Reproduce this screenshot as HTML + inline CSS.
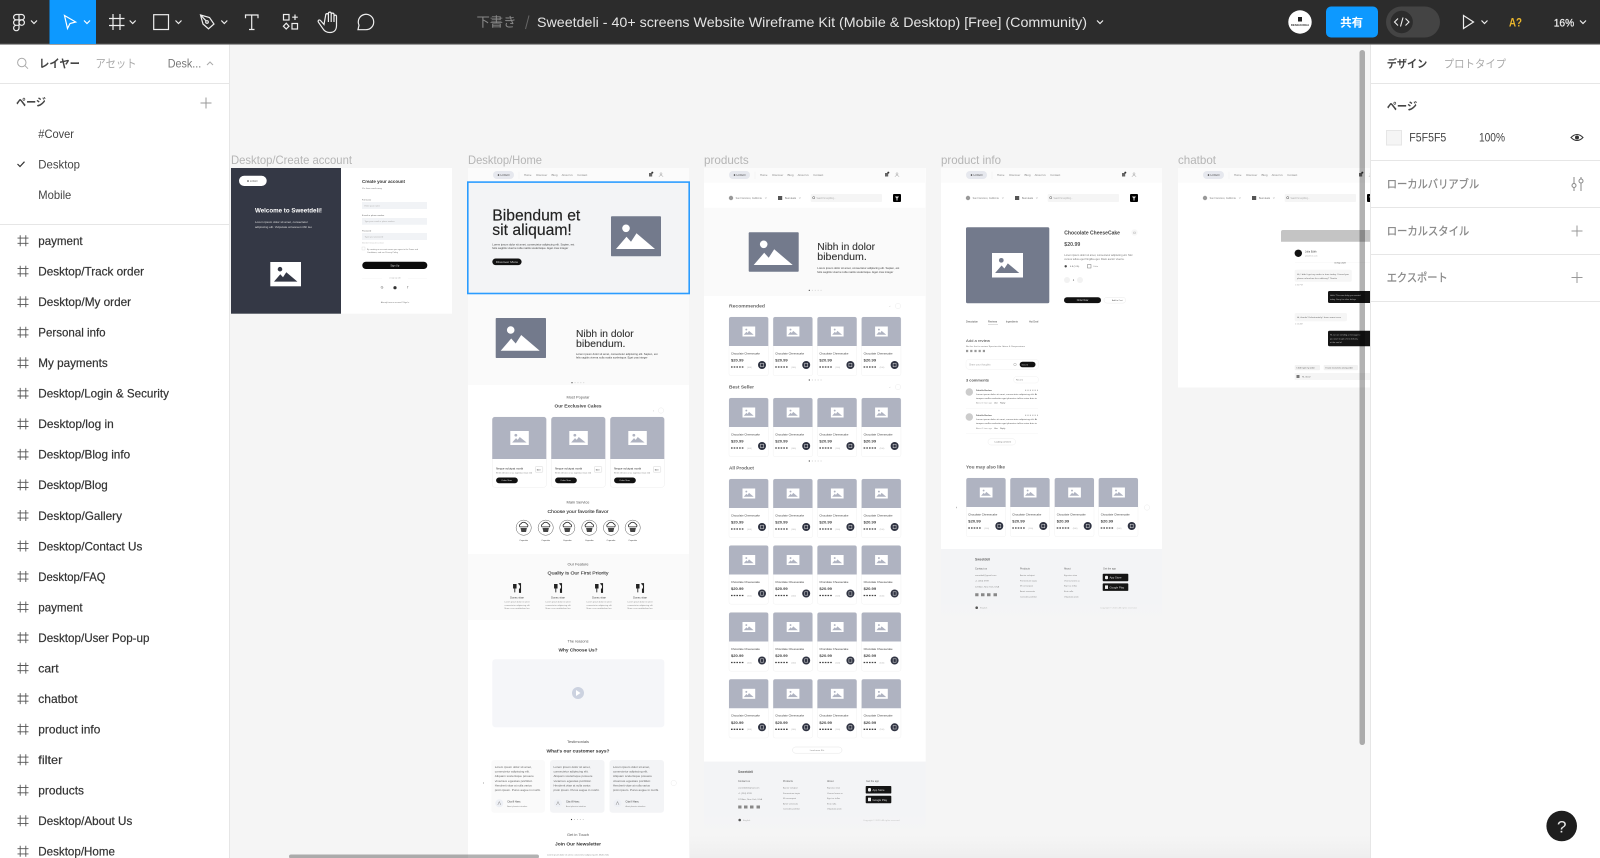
<!DOCTYPE html>
<html lang="ja"><head><meta charset="utf-8"><title>Sweetdeli - Figma</title>
<style>
html,body{margin:0;padding:0;width:1600px;height:858px;overflow:hidden;background:#f5f5f5}
svg{display:block;position:absolute;left:0;top:0;filter:blur(.35px)}
text{font-family:"Liberation Sans","Noto Sans CJK JP",sans-serif}
.ly{font-size:12px;fill:#333;stroke:#333;stroke-width:.2}
.pg{font-size:12px;fill:#444}
.lb{font-size:12px;fill:#b5b5b5}
.sec{font-size:11.5px;fill:#888;stroke:#888;stroke-width:.25}
</style></head><body>
<svg width="1600" height="858" viewBox="0 0 1600 858" xmlns="http://www.w3.org/2000/svg">
<defs>
<g id="mtn"><circle cx="15" cy="12" r="3.8"/><path d="M5 32.7L15.5 20.5 20 25.5 25.5 17 44 32.7z"/></g>
<path id="chev" d="M-3-1.5L0 1.5 3-1.5" fill="none"/>
<g id="hash"><path d="M-2.8-5.5V5.5M2.8-5.5V5.5M-5.5-2.6H5.5M-5.5 2.6H5.5" fill="none" stroke="#555" stroke-width=".9"/></g>
<g id="plus"><path d="M-5.5 0H5.5M0-5.5V5.5" stroke="#999" stroke-width="1" fill="none"/></g>
<g id="card">
<rect width="39.3" height="58.7" rx="2" fill="#fff" stroke="#eeeeee" stroke-width=".4"/>
<path d="M0 29V2a2 2 0 0 1 2-2h35.3a2 2 0 0 1 2 2v27z" fill="#afb3c1"/>
<rect x="13.5" y="9.5" width="12.7" height="10" fill="#fff"/>
<use href="#mtn" transform="translate(13.5 9.5) scale(.254)" fill="#afb3c1"/>
<text x="2" y="37.3" font-size="2.5" fill="#444" textLength="29" lengthAdjust="spacingAndGlyphs">Chocolate Cheesecake</text>
<text x="2" y="44.7" font-size="3.4" font-weight="700" fill="#444" textLength="12.5" lengthAdjust="spacingAndGlyphs">$20.99</text>
<path d="M2 50H15.5" stroke="#444" stroke-width="1.3" stroke-dasharray="1.6 1.1"/>
<text x="18" y="50.8" font-size="2" fill="#aaa">(100)</text>
<circle cx="33" cy="48" r="4" fill="#2f3342"/><rect x="31.5" y="46.3" width="3" height="3.4" fill="none" stroke="#ddd" stroke-width=".5"/>
</g>
<g id="nav">
<rect width="221" height="14.7" fill="#fbfbfb"/>
<rect x="25" y="3" width="21" height="8" rx="4" fill="#e6e8ee"/><circle cx="30.5" cy="7" r=".8" fill="#333"/><text x="32.5" y="8" font-size="2.6" fill="#444" textLength="9" lengthAdjust="spacingAndGlyphs">LOGO</text>
<path d="M51 3.5V11" stroke="#eee" stroke-width=".4"/>
<g font-size="2.4" fill="#888"><text x="56" y="7.8" textLength="7.5" lengthAdjust="spacingAndGlyphs">Home</text><text x="68.3" y="7.8" textLength="11" lengthAdjust="spacingAndGlyphs">Discover</text><text x="83.5" y="7.8" textLength="6" lengthAdjust="spacingAndGlyphs">Blog</text><text x="93.7" y="7.8" textLength="11" lengthAdjust="spacingAndGlyphs">About Us</text><text x="109.3" y="7.8" textLength="10" lengthAdjust="spacingAndGlyphs">Contact</text></g>
<rect x="181" y="5" width="3.2" height="3.5" fill="#666"/><circle cx="184.3" cy="4.6" r="1" fill="#333"/>
<circle cx="193" cy="5.8" r="1" fill="none" stroke="#888" stroke-width=".4"/><path d="M191 9c0-2 4-2 4 0" fill="none" stroke="#888" stroke-width=".4"/>
</g>
<g id="srch">
<circle cx="27" cy="30" r="2.2" fill="#999"/><text x="31.7" y="30.8" font-size="2.3" fill="#888" textLength="26" lengthAdjust="spacingAndGlyphs">San Francisco, California</text>
<path d="M61 29.5l.8 1 .8-1" stroke="#888" stroke-width=".4" fill="none"/>
<rect x="74" y="28" width="4.2" height="4" fill="#555"/><text x="81" y="30.8" font-size="2.3" fill="#777" textLength="11" lengthAdjust="spacingAndGlyphs">Best deals</text><path d="M95 29.5l.8 1 .8-1" stroke="#888" stroke-width=".4" fill="none"/>
<rect x="106.7" y="26" width="71.3" height="8" rx="1" fill="#f5f5f5"/><circle cx="109.7" cy="29.7" r="1.1" fill="none" stroke="#555" stroke-width=".5"/><text x="112.5" y="30.8" font-size="2.3" fill="#aaa" textLength="19" lengthAdjust="spacingAndGlyphs">Search for anything...</text>
<rect x="189" y="26" width="8" height="8" rx="1" fill="#000"/><path d="M191 28.5h4l-1.5 2v2h-1v-2z" fill="#ddd"/>
</g>
<g id="foot">
<text x="738" y="773" font-size="3.3" font-weight="700" fill="#666">Sweetdeli</text>
<g font-size="2.5" fill="#666">
<text x="738" y="782">Contact us</text><text x="783" y="782">Products</text><text x="827" y="782">About</text><text x="866" y="782">Get the app</text></g>
<g font-size="2.2" fill="#888">
<text x="738" y="788.5">sweetdeli@gmail.com</text><text x="738" y="794">+1 (234) 5789</text><text x="738" y="800">123 Ave, New York, USA</text>
<text x="783" y="788.5">Auctor volutpat</text><text x="783" y="794">Fermentum turpis</text><text x="783" y="799">Mi consequat</text><text x="783" y="804.3">Amet venenatis</text><text x="783" y="809.7">Convallis porttitor</text>
<text x="827" y="788.5">Egestas vitae</text><text x="827" y="794">Viverra lorem ac</text><text x="827" y="799">Eget ac tellus</text><text x="827" y="804.3">Erat nulla</text><text x="827" y="809.7">Vulputate proin</text></g>
<path d="M738.2 807H741.5M744 807H747.5M750 807H753.5M756.5 807H760" stroke="#888" stroke-width="3"/>
<rect x="865.7" y="786" width="25.6" height="7.5" rx=".8" fill="#151515"/><rect x="865.7" y="795.7" width="25.6" height="7.5" rx=".8" fill="#151515"/>
<rect x="868" y="788" width="3" height="3.5" rx="1" fill="#eee"/><rect x="868" y="797.7" width="3" height="3.5" fill="#eee"/>
<text x="872.5" y="791" font-size="2.7" fill="#ddd">App Store</text><text x="872.5" y="800.8" font-size="2.7" fill="#ddd">Google Play</text>
<circle cx="739.7" cy="820" r="1.3" fill="#555"/><text x="743" y="821" font-size="2.2" fill="#aaa">English</text>
<text x="863" y="821" font-size="1.9" fill="#c4c4c4" textLength="37" lengthAdjust="spacingAndGlyphs">Copyright © 2023. All rights reserved.</text>
</g>
<g id="cup"><circle r="7.6" fill="#fff" stroke="#333" stroke-width=".4"/><path d="M-3.8-.8a1.9 1.9 0 0 1 .9-3a3.4 3.4 0 0 1 5.8 0a1.9 1.9 0 0 1 .9 3z" fill="#fff" stroke="#222" stroke-width=".8"/><path d="M-3.2.3h6.4l-.9 4h-4.6z" fill="#444"/></g>
<g id="fork"><path d="M-3.5-4v4h2.6V-4M-2.2 0V4.4M1.4-4.4c2.6 1.2 2.6 4.6 1 5.6V4.4h1.2V-4.4z" stroke="#222" stroke-width=".9" fill="#222"/></g>
<g id="pc">
<rect width="54" height="70.3" rx="2.5" fill="#fff" stroke="#eee" stroke-width=".5"/>
<path d="M0 42V2.5A2.5 2.5 0 0 1 2.5 0h49A2.5 2.5 0 0 1 54 2.5V42z" fill="#afb3c1"/>
<rect x="18" y="14" width="18.5" height="14" fill="#fff"/>
<use href="#mtn" transform="translate(18 14) scale(.37 .35)" fill="#afb3c1"/>
<text x="3.8" y="52.5" font-size="2.6" fill="#333" textLength="27" lengthAdjust="spacingAndGlyphs">Neque volutpat morbi</text>
<text x="3.8" y="56.7" font-size="1.8" fill="#777" textLength="36" lengthAdjust="spacingAndGlyphs">Enim elit orci at ac egestas risus nisl</text>
<rect x="43" y="49.7" width="7.5" height="5.5" rx=".5" fill="#fff" stroke="#ccc" stroke-width=".4"/><text x="44.5" y="53.5" font-size="2.2" fill="#444">$20</text>
<rect x="3.8" y="60.5" width="21.7" height="5.7" rx="2.8" fill="#111"/><text x="9" y="64.2" font-size="2.2" fill="#ddd">Order Now</text>
</g>
<g id="feat">
<use href="#fork"/>
<text y="10.4" font-size="2.6" fill="#444" text-anchor="middle">Donec vitae</text>
<g font-size="1.8" fill="#888" text-anchor="middle"><text y="14.3" textLength="25" lengthAdjust="spacingAndGlyphs">Lorem ipsum dolor sit amet</text><text y="17.8" textLength="25" lengthAdjust="spacingAndGlyphs">consectetur adipiscing elit</text><text y="21" textLength="25" lengthAdjust="spacingAndGlyphs">Nunc cras vestibulum leo</text></g>
</g>
<g id="tc">
<g font-size="2.5" fill="#666"><text x="3.5" y="8" textLength="37" lengthAdjust="spacingAndGlyphs">Lorem ipsum dolor sit amet,</text><text x="3.5" y="12.6" textLength="35" lengthAdjust="spacingAndGlyphs">consectetur adipiscing elit.</text><text x="3.5" y="17.2" textLength="39" lengthAdjust="spacingAndGlyphs">Aliquam scelerisque posuere</text><text x="3.5" y="21.8" textLength="38" lengthAdjust="spacingAndGlyphs">vivamus egestas porttitor.</text><text x="3.5" y="26.4" textLength="37" lengthAdjust="spacingAndGlyphs">Hendrerit vitae at nulla varius</text><text x="3.5" y="31" textLength="46" lengthAdjust="spacingAndGlyphs">proin ipsum. Purus augue in morbi.</text></g>
<circle cx="8" cy="43.3" r="4" fill="#eef0f5"/><path d="M6.5 45l1.5-3.5 1.5 3.5" stroke="#777" stroke-width=".4" fill="none"/>
<text x="16" y="42.6" font-size="2.5" fill="#444">Cita ill Haec</text><text x="16" y="46.8" font-size="1.9" fill="#888">Amet pharetra interdum</text>
</g>
<g id="dots"><circle cx="0" r=".6" fill="#333"/><path d="M2.6 0H14" stroke="#ccc" stroke-width=".9" stroke-dasharray=".9 2"/></g>
<linearGradient id="sh" x1="0" y1="0" x2="0" y2="1"><stop offset="0" stop-color="#f0f0f0" stop-opacity="0"/><stop offset="1" stop-color="#eeeeee"/></linearGradient>
<linearGradient id="ft" x1="0" y1="0" x2="0" y2="1"><stop offset="0" stop-color="#f3f4f6"/><stop offset=".75" stop-color="#f3f4f6"/><stop offset="1" stop-color="#f5f5f5"/></linearGradient>
</defs>

<rect width="1600" height="858" fill="#f5f5f5"/>

<!-- labels -->
<text class="lb" x="231" y="164.2" textLength="121" lengthAdjust="spacingAndGlyphs">Desktop/Create account</text>
<text class="lb" x="468" y="164.2" textLength="74" lengthAdjust="spacingAndGlyphs">Desktop/Home</text>
<text class="lb" x="704" y="164.2" textLength="44.7" lengthAdjust="spacingAndGlyphs">products</text>
<text class="lb" x="941" y="164.2" textLength="60" lengthAdjust="spacingAndGlyphs">product info</text>
<text class="lb" x="1178" y="164.2" textLength="38" lengthAdjust="spacingAndGlyphs">chatbot</text>

<!-- Create account -->
<rect x="231" y="168" width="221" height="145.7" fill="#fff"/>
<rect x="231" y="168" width="110" height="145.7" fill="#343845"/>
<rect x="239" y="175.7" width="27.7" height="10.3" rx="5.1" fill="#fff"/><circle cx="248" cy="181" r=".8" fill="#333"/><text x="250" y="182" font-size="2.6" fill="#555">LOGO</text>
<text x="255" y="212.5" font-size="6.3" font-weight="700" fill="#fff" textLength="67" lengthAdjust="spacingAndGlyphs">Welcome to Sweetdeli!</text>
<g font-size="2.8" fill="#ddd"><text x="255" y="223.2" textLength="53" lengthAdjust="spacingAndGlyphs">Lorem ipsum dolor sit amet, consectetur</text><text x="255" y="228" textLength="57" lengthAdjust="spacingAndGlyphs">adipiscing elit. Vulputate at laoreet nibh leo</text></g>
<rect x="270.3" y="262" width="30.7" height="24.3" fill="#fff"/><use href="#mtn" transform="translate(271 262) scale(.6)" fill="#343845"/>
<text x="362" y="183" font-size="4.3" font-weight="700" fill="#333" textLength="43" lengthAdjust="spacingAndGlyphs">Create your account</text>
<text x="362" y="189.2" font-size="2.2" fill="#777" textLength="20" lengthAdjust="spacingAndGlyphs">It's free and easy</text>
<g font-size="2.1" fill="#666"><text x="362" y="200.6">Full name</text><text x="362" y="216.2">E-mail or phone number</text><text x="362" y="231.6">Password</text></g>
<rect x="362" y="202" width="65" height="7" fill="#f1f3f6"/><rect x="362" y="218" width="65" height="6.8" fill="#f1f3f6"/><rect x="362" y="233" width="65" height="7" fill="#f1f3f6"/>
<g font-size="2.1" fill="#aaa"><text x="364.5" y="206.4">Enter your name</text><text x="364.5" y="222.2" textLength="30" lengthAdjust="spacingAndGlyphs">Type your e-mail or phone number</text><text x="364.5" y="237.4">Type your password</text></g>
<text x="362" y="243.3" font-size="1.7" fill="#bbb">Must be 8 characters at least</text>
<rect x="362" y="247" width="3" height="3" fill="#fff" stroke="#ccc" stroke-width=".3"/>
<g font-size="1.8" fill="#777"><text x="367" y="250" textLength="51" lengthAdjust="spacingAndGlyphs">By creating an account means you agree to the Terms and</text><text x="367" y="253" textLength="31" lengthAdjust="spacingAndGlyphs">Conditions, and our Privacy Policy</text></g>
<rect x="362.3" y="261.7" width="65" height="7.3" rx="3.6" fill="#0b0b0b"/><text x="394.8" y="266.4" font-size="2.5" fill="#ddd" text-anchor="middle">Sign Up</text>
<text x="395" y="278.7" font-size="1.8" fill="#aaa" text-anchor="middle">or sign up with</text><path d="M362 278.5h20M408 278.5h19" stroke="#f2f2f2" stroke-width=".4"/>
<g font-size="3.6" fill="#555" text-anchor="middle"><text x="382" y="288.7">G</text><text x="407.7" y="288.7">f</text></g><circle cx="395" cy="287.7" r="1.6" fill="#333"/>
<text x="395" y="303" font-size="1.9" fill="#777" text-anchor="middle">Already have an account? Sign In</text>

<!-- Home -->
<rect x="468" y="168" width="221" height="690" fill="#fff"/>
<use href="#nav" x="468" y="168"/>
<rect x="468" y="183" width="221" height="111" fill="#f3f4f6"/>
<text x="492.3" y="220.5" font-size="15.4" fill="#222" stroke="#222" stroke-width=".15" textLength="88" lengthAdjust="spacingAndGlyphs">Bibendum et</text>
<text x="492.3" y="235.2" font-size="15.4" fill="#222" stroke="#222" stroke-width=".15" textLength="79.5" lengthAdjust="spacingAndGlyphs">sit aliquam!</text>
<g font-size="2.6" fill="#444"><text x="492.3" y="245.3" textLength="82" lengthAdjust="spacingAndGlyphs">Lorem ipsum dolor sit amet, consectetur adipiscing elit. Sapien, est</text><text x="492.3" y="249" textLength="76" lengthAdjust="spacingAndGlyphs">felis sagittis viverra nulla mattis scelerisque. Eget cras integer</text></g>
<rect x="492.3" y="258.5" width="29.3" height="6.6" rx="3.3" fill="#111"/><text x="507" y="263" font-size="2.6" fill="#ddd" text-anchor="middle" textLength="22" lengthAdjust="spacingAndGlyphs">Discover More</text>
<rect x="611" y="216.3" width="50" height="40" rx=".8" fill="#737a8c"/><use href="#mtn" transform="translate(611 216.3)" fill="#fff"/>
<rect x="467.8" y="182.1" width="221.4" height="111.4" fill="none" stroke="#2b9cff" stroke-width="1.6"/>
<rect x="468" y="294.5" width="221" height="90.5" fill="#fafafa"/>
<rect x="495.7" y="318" width="50.3" height="40" rx=".8" fill="#737a8c"/><use href="#mtn" transform="translate(495.7 318)" fill="#fff"/>
<text x="576" y="336.8" font-size="10.4" fill="#333" stroke="#333" stroke-width=".1" textLength="57.7" lengthAdjust="spacingAndGlyphs">Nibh in dolor</text>
<text x="576" y="346.8" font-size="10.4" fill="#333" stroke="#333" stroke-width=".1" textLength="49.5" lengthAdjust="spacingAndGlyphs">bibendum.</text>
<g font-size="2.6" fill="#444"><text x="576" y="355" textLength="81.5" lengthAdjust="spacingAndGlyphs">Lorem ipsum dolor sit amet, consectetur adipiscing elit. Sapien, est</text><text x="576" y="358.7" textLength="71.5" lengthAdjust="spacingAndGlyphs">felis sagittis viverra nulla mattis scelerisque. Eget cras integer</text></g>
<use href="#dots" transform="translate(572 382.7)"/>

<g text-anchor="middle">
<text x="578" y="398.6" font-size="3.3" fill="#555" textLength="23" lengthAdjust="spacingAndGlyphs">Most Popular</text>
<text x="578" y="407.7" font-size="4.5" font-weight="700" fill="#444" textLength="47" lengthAdjust="spacingAndGlyphs">Our Exclusive Cakes</text>
<text x="578" y="503.6" font-size="3.3" fill="#555" textLength="23" lengthAdjust="spacingAndGlyphs">Main Service</text>
<text x="578" y="512.8" font-size="4.6" fill="#333" stroke="#333" stroke-width=".1" textLength="61" lengthAdjust="spacingAndGlyphs">Choose your favorite flavor</text>
</g>
<text x="653" y="411.5" font-size="2.6" fill="#888">‹</text><circle cx="661" cy="410.5" r="2.7" fill="#fff" stroke="#ddd" stroke-width=".3"/>
<use href="#pc" x="492.3" y="417"/><use href="#pc" x="551.3" y="417"/><use href="#pc" x="610.3" y="417"/>
<use href="#cup" x="523.7" y="527.7"/><use href="#cup" x="545.7" y="527.7"/><use href="#cup" x="567.3" y="527.7"/><use href="#cup" x="589.3" y="527.7"/><use href="#cup" x="611" y="527.7"/><use href="#cup" x="632.7" y="527.7"/>
<g font-size="2.2" fill="#333" text-anchor="middle"><text x="523.7" y="541.2">Cupcake</text><text x="545.7" y="541.2">Cupcake</text><text x="567.3" y="541.2">Cupcake</text><text x="589.3" y="541.2">Cupcake</text><text x="611" y="541.2">Cupcake</text><text x="632.7" y="541.2">Cupcake</text></g>

<rect x="468" y="554" width="221" height="66" fill="#fafafa"/>
<g text-anchor="middle">
<text x="578" y="565.6" font-size="3.3" fill="#555" textLength="21" lengthAdjust="spacingAndGlyphs">Our Feature</text>
<text x="578" y="574.7" font-size="4.6" fill="#333" stroke="#333" stroke-width=".1" textLength="61" lengthAdjust="spacingAndGlyphs">Quality is Our First Priority</text>
<text x="578" y="642.5" font-size="3.3" fill="#555" textLength="21" lengthAdjust="spacingAndGlyphs">The reasons</text>
<text x="578" y="651.7" font-size="4.6" font-weight="700" fill="#333" textLength="39" lengthAdjust="spacingAndGlyphs">Why Choose Us?</text>
<text x="578" y="743.2" font-size="3.3" fill="#555" textLength="22" lengthAdjust="spacingAndGlyphs">Testimonials</text>
<text x="578" y="752.7" font-size="4.6" font-weight="700" fill="#333" textLength="63" lengthAdjust="spacingAndGlyphs">What's our customer says?</text>
<text x="578" y="836.2" font-size="3.3" fill="#555" textLength="22" lengthAdjust="spacingAndGlyphs">Get in Touch</text>
<text x="578" y="845.7" font-size="4.6" font-weight="700" fill="#333" textLength="46" lengthAdjust="spacingAndGlyphs">Join Our Newsletter</text>
<text x="578" y="855.7" font-size="2.2" fill="#888" textLength="62" lengthAdjust="spacingAndGlyphs">Lorem ipsum dolor sit amet, consectetur adipiscing elit. Mattis felis</text>
</g>
<use href="#feat" x="517" y="588"/><use href="#feat" x="558" y="588"/><use href="#feat" x="599" y="588"/><use href="#feat" x="640" y="588"/>
<rect x="492.3" y="659.3" width="172" height="68" rx="3" fill="#f5f6f9"/>
<circle cx="578" cy="693" r="6" fill="#ccd2e0"/><path d="M576 690l4.5 3-4.5 3z" fill="#fff"/>
<rect x="491.3" y="760" width="53.7" height="52.7" rx="3" fill="#fafafa"/><rect x="550" y="760" width="54.5" height="52.7" rx="3" fill="#f3f4f6"/><rect x="609.5" y="760" width="54.5" height="52.7" rx="3" fill="#f3f4f6"/>
<use href="#tc" x="491.3" y="760"/><use href="#tc" x="550" y="760"/><use href="#tc" x="609.5" y="760"/>
<path d="M484 782.3l-1 .7 1 .7" stroke="#888" stroke-width=".4" fill="none"/><circle cx="673.7" cy="783" r="2.7" fill="#fff" stroke="#ddd" stroke-width=".3"/>
<use href="#dots" transform="translate(571.5 819.5)"/>

<!-- products -->
<rect x="704" y="168" width="221.7" height="593.7" fill="#fff"/>
<use href="#nav" x="704" y="168"/><use href="#srch" x="704" y="168"/>
<rect x="704" y="207.7" width="221.7" height="88.3" fill="#fafafa"/>
<rect x="748.7" y="232.3" width="50" height="39.4" rx=".8" fill="#737a8c"/><use href="#mtn" transform="translate(748.7 232.3)" fill="#fff"/>
<text x="817.3" y="250.2" font-size="10.4" fill="#333" stroke="#333" stroke-width=".1" textLength="57.7" lengthAdjust="spacingAndGlyphs">Nibh in dolor</text>
<text x="817.3" y="260.2" font-size="10.4" fill="#333" stroke="#333" stroke-width=".1" textLength="49.5" lengthAdjust="spacingAndGlyphs">bibendum.</text>
<g font-size="2.6" fill="#444"><text x="817.3" y="269.2" textLength="82" lengthAdjust="spacingAndGlyphs">Lorem ipsum dolor sit amet, consectetur adipiscing elit. Sapien, est</text><text x="817.3" y="273" textLength="76" lengthAdjust="spacingAndGlyphs">felis sagittis viverra nulla mattis scelerisque. Eget cras integer</text></g>
<use href="#dots" transform="translate(809.3 290.3)"/>
<g font-size="4.6" font-weight="700" fill="#666"><text x="729" y="307.6" textLength="36" lengthAdjust="spacingAndGlyphs">Recommended</text><text x="729" y="388.7" textLength="25" lengthAdjust="spacingAndGlyphs">Best Seller</text><text x="729" y="469.3" textLength="25" lengthAdjust="spacingAndGlyphs">All Product</text></g>
<g font-size="2.6" fill="#999"><text x="889.5" y="307">‹</text><text x="889.5" y="388">‹</text></g>
<circle cx="898" cy="306" r="2.7" fill="#fff" stroke="#ddd" stroke-width=".3"/><circle cx="898" cy="387" r="2.7" fill="#fff" stroke="#ddd" stroke-width=".3"/>
<use href="#card" x="729" y="317"/><use href="#card" x="773.2" y="317"/><use href="#card" x="817.4" y="317"/><use href="#card" x="861.6" y="317"/>
<use href="#dots" transform="translate(809.3 380)"/>
<use href="#card" x="729" y="398"/><use href="#card" x="773.2" y="398"/><use href="#card" x="817.4" y="398"/><use href="#card" x="861.6" y="398"/>
<use href="#dots" transform="translate(809.3 461)"/>
<use href="#card" x="729" y="479"/><use href="#card" x="773.2" y="479"/><use href="#card" x="817.4" y="479"/><use href="#card" x="861.6" y="479"/>
<use href="#card" x="729" y="545.5"/><use href="#card" x="773.2" y="545.5"/><use href="#card" x="817.4" y="545.5"/><use href="#card" x="861.6" y="545.5"/>
<use href="#card" x="729" y="612.5"/><use href="#card" x="773.2" y="612.5"/><use href="#card" x="817.4" y="612.5"/><use href="#card" x="861.6" y="612.5"/>
<use href="#card" x="729" y="679.3"/><use href="#card" x="773.2" y="679.3"/><use href="#card" x="817.4" y="679.3"/><use href="#card" x="861.6" y="679.3"/>
<rect x="792.5" y="747" width="49.5" height="6.2" rx="3.1" fill="#fff" stroke="#ddd" stroke-width=".4"/><text x="817.2" y="750.9" font-size="2.2" fill="#888" text-anchor="middle">Load more 90+</text>
<rect x="704" y="761.7" width="221.7" height="70" fill="url(#ft)"/>
<use href="#foot"/>

<!-- product info -->
<rect x="941" y="168" width="221" height="381" fill="#fff"/>
<use href="#nav" x="941" y="168"/><use href="#srch" x="941" y="168"/>
<rect x="966" y="227.3" width="83.3" height="76" rx="1.5" fill="#737a8c"/>
<rect x="992" y="253" width="31" height="24.5" fill="#fff"/><use href="#mtn" transform="translate(992 253) scale(.62 .61)" fill="#737a8c"/>
<text x="1064.3" y="234.5" font-size="5" font-weight="700" fill="#444" textLength="55.7" lengthAdjust="spacingAndGlyphs">Chocolate CheeseCake</text>
<circle cx="1134.5" cy="232.5" r="3.2" fill="#f7f7f7"/><path d="M1133.5 232h2v1.5h-2z" fill="none" stroke="#999" stroke-width=".3"/>
<text x="1064.3" y="246.2" font-size="5" font-weight="700" fill="#555" textLength="16" lengthAdjust="spacingAndGlyphs">$20.99</text>
<g font-size="2.4" fill="#777"><text x="1064.3" y="256.2" textLength="68" lengthAdjust="spacingAndGlyphs">Lorem ipsum dolor sit amet, consectetur adipiscing elit. Nisl</text><text x="1064.3" y="260" textLength="60" lengthAdjust="spacingAndGlyphs">cursus tellus eget fringilla eget. Diam auctor viverra.</text></g>
<circle cx="1065.7" cy="266.3" r="1.2" fill="#444"/><text x="1070" y="267.2" font-size="2.2" fill="#555">4.8 (1.2k)</text><rect x="1087.5" y="264.5" width="3.5" height="3.5" fill="none" stroke="#555" stroke-width=".4"/><text x="1093" y="267.2" font-size="2.2" fill="#888">Cake</text>
<circle cx="1067" cy="280" r="3" fill="#f2f2f2"/><circle cx="1080" cy="280" r="3" fill="#f2f2f2"/><text x="1073.5" y="281" font-size="2.6" fill="#444" text-anchor="middle">1</text>
<rect x="1064" y="297.3" width="37" height="5.8" rx="2.9" fill="#111"/><text x="1082.5" y="301.2" font-size="2.4" fill="#ddd" text-anchor="middle">Order Now</text>
<rect x="1104" y="297.3" width="21.7" height="5.8" rx="2.9" fill="#fff" stroke="#e4e4e4" stroke-width=".4"/><text x="1112" y="301" font-size="2.1" fill="#555">Add to Cart</text>
<g font-size="2.4" fill="#444"><text x="966" y="322.6">Description</text><text x="988" y="322.6">Reviews</text><text x="1006" y="322.6">Ingredients</text><text x="1029" y="322.6">Hot Deal</text></g>
<path d="M988 324.3H998" stroke="#aaa" stroke-width=".4"/>
<text x="966" y="341.8" font-size="3.4" fill="#444" textLength="24" lengthAdjust="spacingAndGlyphs">Add a review</text>
<text x="966" y="347" font-size="2" fill="#777" textLength="59" lengthAdjust="spacingAndGlyphs">Be the first to review Spectacular Ideas &amp; Suspensions</text>
<path d="M966 351H985" stroke="#999" stroke-width="2.2" stroke-dasharray="2.2 2"/>
<rect x="966" y="359.3" width="72.5" height="10" rx="3" fill="#fff" stroke="#eee" stroke-width=".4"/><text x="969" y="365.3" font-size="2.4" fill="#aaa">Share your thoughts</text>
<rect x="1019.7" y="361.7" width="15.8" height="5.6" rx="2.8" fill="#111"/><text x="1021.5" y="365.4" font-size="2.1" fill="#ddd">Send it</text>
<circle cx="1015" cy="364.5" r="1.3" fill="none" stroke="#999" stroke-width=".4"/>
<text x="966" y="381.5" font-size="3.8" font-weight="700" fill="#555" textLength="23" lengthAdjust="spacingAndGlyphs">3 comments</text>
<rect x="1013.7" y="376.5" width="24.8" height="6.5" rx="3" fill="#fff" stroke="#eee" stroke-width=".4"/><text x="1016" y="380.7" font-size="2.2" fill="#777">Recent</text>
<circle cx="969.3" cy="392" r="3.7" fill="#ccc"/><circle cx="969.3" cy="417" r="3.7" fill="#ccc"/>
<g font-size="2.1" fill="#555">
<text x="976" y="391" font-weight="700">Fabiello Bechen</text><text x="976" y="395" textLength="61" lengthAdjust="spacingAndGlyphs">Lorem ipsum dolor sit amet, consectetur adipiscing elit. At</text><text x="976" y="399" textLength="61" lengthAdjust="spacingAndGlyphs">tempor mollis molestie eget pharetra tellus enim duis in</text><text x="976" y="403.5" fill="#999">About 1 hour ago</text><text x="994" y="403.5">Like</text><text x="1000" y="403.5">Reply</text>
<text x="976" y="416" font-weight="700">Fabiello Bechen</text><text x="976" y="420.2" textLength="61" lengthAdjust="spacingAndGlyphs">Lorem ipsum dolor sit amet, consectetur adipiscing elit. At</text><text x="976" y="424.2" textLength="61" lengthAdjust="spacingAndGlyphs">tempor mollis molestie eget pharetra tellus enim duis in</text><text x="976" y="429" fill="#999">About 1 hour ago</text><text x="994" y="429">Like</text><text x="1000" y="429">Reply</text></g>
<path d="M1025 390.3h13M1025 415.3h13" stroke="#aaa" stroke-width="1" stroke-dasharray="1.2 1.2"/>
<path d="M966 408.3H1038M966 433.5H1038" stroke="#f2f2f2" stroke-width=".4"/>
<rect x="988" y="438.7" width="27.5" height="6.3" rx="3" fill="#fff" stroke="#e8e8e8" stroke-width=".4"/><text x="994.5" y="442.6" font-size="2.1" fill="#666">Loading comment</text>
<text x="966" y="468.6" font-size="4.4" font-weight="700" fill="#666" textLength="39" lengthAdjust="spacingAndGlyphs">You may also like</text>
<use href="#card" x="966.3" y="478"/><use href="#card" x="1010.3" y="478"/><use href="#card" x="1054.7" y="478"/><use href="#card" x="1098.7" y="478"/>
<path d="M957 506.8l-1 .7 1 .7" stroke="#888" stroke-width=".4" fill="none"/><circle cx="1147" cy="507.5" r="2.7" fill="#fff" stroke="#ddd" stroke-width=".3"/>
<rect x="941" y="549" width="221" height="70" fill="url(#ft)"/>
<use href="#foot" transform="translate(237 -212.3)"/>

<!-- chatbot -->
<rect x="1178" y="168" width="222" height="219.5" fill="#fff"/>
<use href="#nav" x="1178" y="168"/><use href="#srch" x="1178" y="168"/>
<path d="M1281 241.7V232a2 2 0 0 1 2-2h100v11.7z" fill="#c4c4c4"/>
<circle cx="1298.3" cy="253.3" r="3.7" fill="#111"/>
<text x="1305" y="252.5" font-size="2.5" fill="#444">Julia Edith</text><text x="1305" y="256.3" font-size="1.9" fill="#aaa">julia@test.com</text>
<path d="M1295 262.3H1371" stroke="#f0f0f0" stroke-width=".4"/><text x="1340" y="263.5" font-size="2" fill="#444" text-anchor="middle">16 Sep 2023</text>
<rect x="1294.7" y="269.7" width="57" height="12" rx="1.5" fill="#f6f6f6"/>
<g font-size="2.1" fill="#666"><text x="1297" y="274.8" textLength="52" lengthAdjust="spacingAndGlyphs">Hi, I didn't get my order in time today. I found you</text><text x="1297" y="278.8" textLength="40" lengthAdjust="spacingAndGlyphs">please refund me for a delivery? Thanks</text><text x="1295" y="285.3" fill="#aaa">1:32 PM</text></g>
<rect x="1328" y="291" width="50" height="12" rx="1.5" fill="#151515"/>
<g font-size="2.1" fill="#bbb"><text x="1330" y="296">Hello! This was delay you wanted</text><text x="1330" y="300">today. Sorry for other delays</text></g>
<rect x="1294.7" y="313" width="52.3" height="8.3" rx="1.5" fill="#f6f6f6"/>
<g font-size="2.1" fill="#666"><text x="1297" y="317.9" textLength="44" lengthAdjust="spacingAndGlyphs">Hi, thanks! Unfortunately I have some issue</text><text x="1295" y="324.7" fill="#aaa">2:15 AM</text></g>
<rect x="1328" y="330.7" width="50" height="15.6" rx="1.5" fill="#151515"/>
<g font-size="2.1" fill="#bbb"><text x="1330" y="335.5">Hi, we are sending a message to</text><text x="1330" y="339.3">you want to get a free delivery</text><text x="1330" y="343">at the end of</text></g>
<rect x="1294.7" y="365" width="25.3" height="5.3" rx="1" fill="#f2f2f2"/><rect x="1323.7" y="365" width="34.3" height="5.3" rx="1" fill="#f2f2f2"/>
<g font-size="2.1" fill="#555"><text x="1296.5" y="368.6">I didn't get my order</text><text x="1325.5" y="368.6">I have received a wrong order</text></g>
<rect x="1294.7" y="373" width="90" height="7" fill="#f5f5f5"/><rect x="1296.5" y="375" width="3" height="3" fill="#777"/><text x="1302" y="377.5" font-size="2.2" fill="#666">Hi, there!</text>

<!-- subtle lower shading -->
<rect x="690" y="835" width="681" height="23" fill="url(#sh)"/>

<!-- scrollbars -->
<rect x="1359.5" y="50" width="5.5" height="695" rx="2.7" fill="#000" fill-opacity=".3"/>
<rect x="289" y="854.5" width="250" height="4" rx="2" fill="#000" fill-opacity=".3"/>

<!-- left panel -->
<rect width="229" height="858" fill="#fff"/><rect x="229" y="44" width="1" height="814" fill="#e6e6e6"/>
<rect y="83" width="229" height="1" fill="#e6e6e6"/><rect y="224" width="229" height="1" fill="#e6e6e6"/>
<circle cx="21.8" cy="62.5" r="4.2" fill="none" stroke="#aaa" stroke-width="1"/><path d="M25 65.7l3 3" stroke="#aaa" stroke-width="1"/>
<text x="39" y="67.7" font-size="11.5" font-weight="700" fill="#444" textLength="41" lengthAdjust="spacingAndGlyphs">レイヤー</text>
<text x="95.5" y="67.7" font-size="11.5" fill="#aaa" textLength="41" lengthAdjust="spacingAndGlyphs">アセット</text>
<text x="167.7" y="67.7" font-size="11.5" fill="#777" textLength="33.5" lengthAdjust="spacingAndGlyphs">Desk...</text>
<use href="#chev" transform="translate(210 63.5) scale(1 -1)" stroke="#aaa"/>
<text x="16" y="106" font-size="11" font-weight="700" fill="#444" textLength="30" lengthAdjust="spacingAndGlyphs">ページ</text>
<use href="#plus" x="206" y="103"/>
<text class="pg" x="38.3" y="137.9" textLength="35.7" lengthAdjust="spacingAndGlyphs">#Cover</text>
<text class="pg" x="38.3" y="168.4" textLength="41.7" lengthAdjust="spacingAndGlyphs">Desktop</text>
<text class="pg" x="38.3" y="198.9" textLength="33" lengthAdjust="spacingAndGlyphs">Mobile</text>
<path d="M17.5 164l2.5 2.5 4.5-4.8" fill="none" stroke="#333" stroke-width="1.2"/>

<use href="#hash" x="23" y="240.7"/><text class="ly" x="38.3" y="245" textLength="44.3" lengthAdjust="spacingAndGlyphs">payment</text>
<use href="#hash" x="23" y="271.2"/><text class="ly" x="38.3" y="275.5" textLength="105.7" lengthAdjust="spacingAndGlyphs">Desktop/Track order</text>
<use href="#hash" x="23" y="301.8"/><text class="ly" x="38.3" y="306" textLength="92.8" lengthAdjust="spacingAndGlyphs">Desktop/My order</text>
<use href="#hash" x="23" y="332.3"/><text class="ly" x="38.3" y="336.6" textLength="67.3" lengthAdjust="spacingAndGlyphs">Personal info</text>
<use href="#hash" x="23" y="362.8"/><text class="ly" x="38.3" y="367.1" textLength="69.4" lengthAdjust="spacingAndGlyphs">My payments</text>
<use href="#hash" x="23" y="393.4"/><text class="ly" x="38.3" y="397.7" textLength="130.6" lengthAdjust="spacingAndGlyphs">Desktop/Login &amp; Security</text>
<use href="#hash" x="23" y="423.9"/><text class="ly" x="38.3" y="428.2" textLength="75.5" lengthAdjust="spacingAndGlyphs">Desktop/log in</text>
<use href="#hash" x="23" y="454.4"/><text class="ly" x="38.3" y="458.7" textLength="91.8" lengthAdjust="spacingAndGlyphs">Desktop/Blog info</text>
<use href="#hash" x="23" y="484.9"/><text class="ly" x="38.3" y="489.2" textLength="69.4" lengthAdjust="spacingAndGlyphs">Desktop/Blog</text>
<use href="#hash" x="23" y="515.5"/><text class="ly" x="38.3" y="519.8" textLength="83.7" lengthAdjust="spacingAndGlyphs">Desktop/Gallery</text>
<use href="#hash" x="23" y="546"/><text class="ly" x="38.3" y="550.3" textLength="104" lengthAdjust="spacingAndGlyphs">Desktop/Contact Us</text>
<use href="#hash" x="23" y="576.5"/><text class="ly" x="38.3" y="580.8" textLength="67.3" lengthAdjust="spacingAndGlyphs">Desktop/FAQ</text>
<use href="#hash" x="23" y="607"/><text class="ly" x="38.3" y="611.3" textLength="44.3" lengthAdjust="spacingAndGlyphs">payment</text>
<use href="#hash" x="23" y="637.6"/><text class="ly" x="38.3" y="641.9" textLength="111.2" lengthAdjust="spacingAndGlyphs">Desktop/User Pop-up</text>
<use href="#hash" x="23" y="668.1"/><text class="ly" x="38.3" y="672.4" textLength="20.3" lengthAdjust="spacingAndGlyphs">cart</text>
<use href="#hash" x="23" y="698.6"/><text class="ly" x="38.3" y="702.9" textLength="39.3" lengthAdjust="spacingAndGlyphs">chatbot</text>
<use href="#hash" x="23" y="729.2"/><text class="ly" x="38.3" y="733.5" textLength="62" lengthAdjust="spacingAndGlyphs">product info</text>
<use href="#hash" x="23" y="759.7"/><text class="ly" x="38.3" y="764" textLength="24" lengthAdjust="spacingAndGlyphs">filter</text>
<use href="#hash" x="23" y="790.2"/><text class="ly" x="38.3" y="794.5" textLength="45.7" lengthAdjust="spacingAndGlyphs">products</text>
<use href="#hash" x="23" y="820.8"/><text class="ly" x="38.3" y="825.1" textLength="94" lengthAdjust="spacingAndGlyphs">Desktop/About Us</text>
<use href="#hash" x="23" y="851.3"/><text class="ly" x="38.3" y="855.6" textLength="76.7" lengthAdjust="spacingAndGlyphs">Desktop/Home</text>

<!-- right panel -->
<rect x="1371" y="44" width="229" height="814" fill="#fff"/><rect x="1370" y="44" width="1" height="814" fill="#e6e6e6"/>
<g fill="#e6e6e6"><rect x="1371" y="83" width="229" height="1"/><rect x="1371" y="160" width="229" height="1"/><rect x="1371" y="207" width="229" height="1"/><rect x="1371" y="254" width="229" height="1"/><rect x="1371" y="301" width="229" height="1"/></g>
<text x="1386.7" y="67.5" font-size="11" font-weight="700" fill="#444" textLength="40.5" lengthAdjust="spacingAndGlyphs">デザイン</text>
<text x="1443.7" y="67.5" font-size="11" fill="#aaa" textLength="62.5" lengthAdjust="spacingAndGlyphs">プロトタイプ</text>
<text x="1386.7" y="110" font-size="11" font-weight="700" fill="#444" textLength="30.5" lengthAdjust="spacingAndGlyphs">ページ</text>
<rect x="1386.5" y="130.5" width="15" height="14.5" fill="#f5f5f5" stroke="#e6e6e6"/>
<text x="1409.3" y="141.3" font-size="11.5" fill="#444" textLength="37" lengthAdjust="spacingAndGlyphs">F5F5F5</text>
<text x="1479" y="141.3" font-size="11.5" fill="#444" textLength="26" lengthAdjust="spacingAndGlyphs">100%</text>
<path d="M1571 137.5q6-6 12 0q-6 6-12 0z" fill="none" stroke="#333"/><circle cx="1577" cy="137.5" r="2" fill="#333"/>
<text class="sec" x="1386.7" y="188.2" textLength="92.5" lengthAdjust="spacingAndGlyphs">ローカルバリアブル</text>
<path d="M1574 177v6.5M1574 187.5v3.5M1581 177v2M1581 183v8" stroke="#888" fill="none"/><circle cx="1574" cy="185.5" r="2" fill="none" stroke="#888"/><circle cx="1581" cy="181" r="2" fill="none" stroke="#888"/>
<text class="sec" x="1386.7" y="235.2" textLength="82.5" lengthAdjust="spacingAndGlyphs">ローカルスタイル</text><use href="#plus" x="1577" y="231"/>
<text class="sec" x="1386.7" y="281.7" textLength="61" lengthAdjust="spacingAndGlyphs">エクスポート</text><use href="#plus" x="1577" y="277.5"/>
<circle cx="1561.7" cy="826" r="15.3" fill="#1e1e1e"/><text x="1561.7" y="832.5" font-size="17" fill="#e8e8e8" text-anchor="middle">?</text>

<!-- top bar -->
<rect width="1600" height="44" fill="#2c2c2c"/><rect y="43.7" width="1600" height="1" fill="#777"/>
<rect x="49.5" width="46.5" height="44" fill="#0d99ff"/>
<g fill="none" stroke="#eee" stroke-width="1.2">
<path d="M19 14.5h-2.7a2.7 2.7 0 0 0 0 5.4H19zM19 14.5h2.7a2.7 2.7 0 0 1 0 5.4H19zM19 19.9h-2.7a2.7 2.7 0 0 0 0 5.4H19zM19 25.3h-2.7a2.7 2.7 0 1 0 2.7 2.7z"/><circle cx="21.7" cy="22.6" r="2.7"/>
<path d="M64.5 15.5L75.7 22 70 23.5 67.5 28.5z" stroke="#fff"/>
<path d="M113 14V30M120 14V30M109 18.5H124.5M109 25.5H124.5"/>
<rect x="153.7" y="14.7" width="14.8" height="14.8"/>
<path d="M200.5 15L209.5 17.5 214 24 208.5 28.8 203 24zM200.5 15L206 20.8"/><circle cx="207" cy="22" r="1.3"/>
<path d="M245.5 18.3V15H258V18.3M251.7 15V29.5M249 29.5H254.5"/>
<rect x="283.5" y="14.5" width="5.5" height="5.5"/><path d="M295 14.5V20M292.2 17.2H297.8"/><path d="M286.2 23.2L289 26.2 286.2 29 283.4 26.2z"/><rect x="292" y="23.5" width="5.5" height="5.5"/>
<path d="M324 24.5l-3.5-4c-1.5-1.5-3 .3-2 1.8l4.5 6.5c1.5 2.5 3.5 3.7 7 3.7 4.5 0 6.5-3 6.5-7V16.5c0-1.8-2.5-1.8-2.5 0V22V14.5c0-1.8-2.8-1.8-2.8 0V22V13.5c0-1.8-2.8-1.8-2.8 0V22V15c0-1.8-2.7-1.8-2.7 0z"/>
<path d="M358 29.7h8a7.7 7.7 0 1 0-7-4.5z"/>
<path d="M1463.5 15.5L1473.5 22 1463.5 28.5z"/>
</g>
<g stroke="#eee" stroke-width="1.2"><use href="#chev" x="34" y="22"/><use href="#chev" x="87" y="22" stroke="#fff"/><use href="#chev" x="132.7" y="22"/><use href="#chev" x="178.5" y="22"/><use href="#chev" x="224.3" y="22"/><use href="#chev" x="1484.5" y="22"/><use href="#chev" x="1583" y="22"/><use href="#chev" x="1100" y="22"/></g>
<text x="476.5" y="26.7" font-size="13.3" fill="#888">下書き</text>
<path d="M529 15.5L525.5 29" stroke="#666" stroke-width="1"/>
<text x="537" y="26.9" font-size="14" fill="#e4e4e4" textLength="550" lengthAdjust="spacingAndGlyphs">Sweetdeli - 40+ screens Website Wireframe Kit (Mobile &amp; Desktop) [Free] (Community)</text>
<circle cx="1300" cy="22" r="11.7" fill="#fff"/><rect x="1298" y="17" width="4" height="4.5" fill="#222"/><text x="1300" y="26" font-size="2.8" font-weight="700" fill="#333" text-anchor="middle">DESIGN IDEA</text>
<rect x="1326" y="6.5" width="52" height="31" rx="5" fill="#0d99ff"/><text x="1351.7" y="26.6" font-size="11.5" font-weight="700" fill="#fff" text-anchor="middle">共有</text>
<rect x="1386" y="6.5" width="54" height="31" rx="15.5" fill="#444"/><circle cx="1401.7" cy="22" r="11.2" fill="#2c2c2c"/>
<path d="M1398 18.5l-3.5 3.5 3.5 3.5M1405.5 18.5l3.5 3.5-3.5 3.5M1403 17.5l-2.5 9" stroke="#eee" stroke-width="1.1" fill="none"/>
<text x="1509" y="26.5" font-size="11.5" font-weight="700" fill="#e9b52c" textLength="13" lengthAdjust="spacingAndGlyphs">A?</text>
<text x="1553.7" y="26.5" font-size="11" fill="#eee" stroke="#eee" stroke-width=".25" textLength="20.5" lengthAdjust="spacingAndGlyphs">16%</text>
</svg>
</body></html>
